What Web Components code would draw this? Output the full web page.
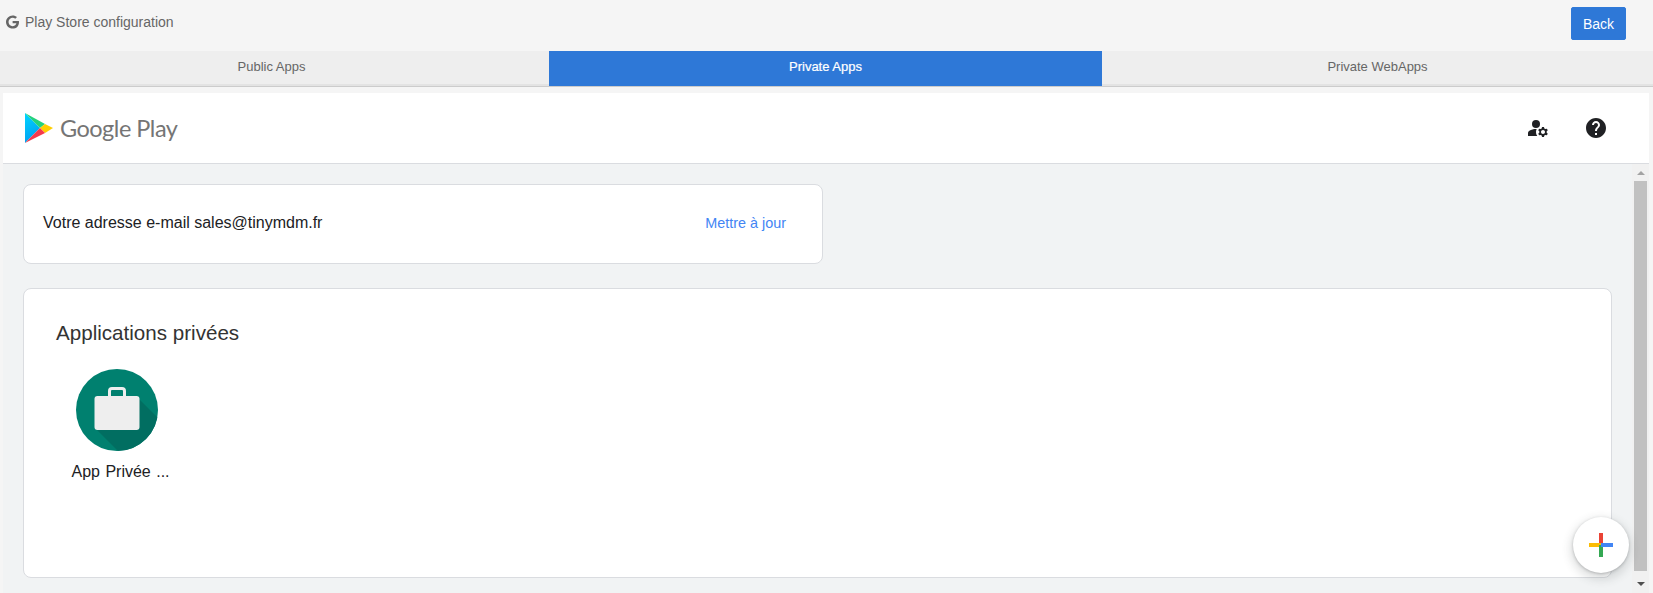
<!DOCTYPE html>
<html lang="en">
<head>
<meta charset="utf-8">
<title>Play Store configuration</title>
<style>
  html, body { margin: 0; height: 593px; overflow: hidden; background: #f5f5f5; font-family: "Liberation Sans", Arial, sans-serif; }
  tab-item:first-child { padding-right: 6px; }
</style>
</head>
<body>
<top-bar>Play Store configuration</top-bar>
<tab-bar>
  <tab-item>Public Apps</tab-item>
  <tab-item active>Private Apps</tab-item>
  <tab-item>Private WebApps</tab-item>
</tab-bar>
<play-frame>
  <play-card slot="cards" kind="mail">
    <span>Votre adresse e-mail sales@tinymdm.fr</span>
    <a slot="action">Mettre à jour</a>
  </play-card>
  <play-card slot="cards" kind="apps">
    <h2 slot="title">Applications privées</h2>
    <app-tile>App Privée ...</app-tile>
  </play-card>
</play-frame>

<script>
class TopBar extends HTMLElement {
  constructor() {
    super();
    this.attachShadow({mode: 'open'}).innerHTML = `
      <style>
        :host {
          display: flex;
          align-items: center;
          justify-content: space-between;
          height: 51px;
          box-sizing: border-box;
          padding: 0 27px 7px 6px;
          background: #f5f5f5;
          color: #666;
          font-size: 14px;
        }
        .title { display: flex; align-items: center; gap: 6px; }
        svg { width: 13px; height: 14px; fill: #666; display: block; }
        button {
          width: 55px;
          height: 33px;
          margin-top: 3px;
          border: 1px solid #2f79d8;
          border-radius: 2px;
          background: #2e78d7;
          color: #fff;
          font: 14px "Liberation Sans", Arial, sans-serif;
          padding: 0;
        }
      </style>
      <div class="title">
        <svg viewBox="0 0 488 512"><path d="M488 261.8C488 403.3 391.1 504 248 504 110.8 504 0 393.2 0 256S110.8 8 248 8c66.8 0 123 24.5 166.3 64.9l-67.5 64.9C258.5 52.6 94.3 116.6 94.3 256c0 86.5 69.1 156.6 153.7 156.6 98.2 0 135-70.4 140.8-106.9H248v-85.3h236.1c2.3 12.7 3.9 24.9 3.9 41.4z"/></svg>
        <span><slot></slot></span>
      </div>
      <button>Back</button>
    `;
  }
}

class TabBar extends HTMLElement {
  constructor() {
    super();
    this.attachShadow({mode: 'open'}).innerHTML = `
      <style>
        :host {
          display: grid;
          grid-template-columns: 549px 553px 551px;
          height: 36px;
          background: #eee;
          border-bottom: 1px solid #ccc;
          box-sizing: border-box;
        }
      </style>
      <slot></slot>
    `;
  }
}

class TabItem extends HTMLElement {
  constructor() {
    super();
    this.attachShadow({mode: 'open'}).innerHTML = `
      <style>
        :host {
          display: flex;
          align-items: center;
          justify-content: center;
          height: 35px;
          box-sizing: border-box;
          padding-bottom: 3px;
          border-bottom: 2px solid #e3e3e3;
          background: #eee;
          color: #666;
          font-size: 13px;
        }
        :host([active]) {
          background: #2e78d7;
          border-bottom-color: #2e78d7;
          color: #fff;
          -webkit-text-stroke: 0.2px #fff;
        }
      </style>
      <slot></slot>
    `;
  }
}

class PlayFrame extends HTMLElement {
  constructor() {
    super();
    this.attachShadow({mode: 'open'}).innerHTML = `
      <style>
        :host {
          display: block;
          margin: 6px 4px 0 3px;
        }
        header {
          display: flex;
          align-items: center;
          height: 71px;
          box-sizing: border-box;
          padding: 0 41px 0 22px;
          background: #fff;
          border-bottom: 1px solid #dadce0;
        }
        .logo { display: flex; align-items: center; gap: 7px; }
        .logo svg { display: block; }
        .word {
          font: 23.5px/28px Lato, "Open Sans", sans-serif;
          color: #757575;
          letter-spacing: -0.5px;
          margin-top: -1px;
        }
        .icons { margin-left: auto; display: flex; gap: 34px; }
        .icons svg { width: 24px; height: 24px; fill: #202124; display: block; }
        .pane {
          position: relative;
          display: flex;
          height: 429px;
          background: #f1f3f4;
        }
        .cards {
          flex: 1;
          display: flex;
          flex-direction: column;
          gap: 24px;
          padding: 20px 20px 0;
        }
        .fab {
          position: absolute;
          left: 1570px;
          top: 353px;
          width: 56px;
          height: 56px;
          border-radius: 50%;
          background: #fff;
          box-shadow: 0 1px 3px rgba(60,64,67,.3), 0 4px 8px 3px rgba(60,64,67,.15);
          display: flex;
          align-items: center;
          justify-content: center;
        }
      </style>
      <header>
        <div class="logo">
          <svg width="28" height="30" viewBox="0 0 28 30">
            <defs>
              <linearGradient id="pb" x1="0" y1="0" x2="0.3" y2="1">
                <stop offset="0" stop-color="#00d6ff"/>
                <stop offset="1" stop-color="#00a0f2"/>
              </linearGradient>
            </defs>
            <polygon points="0,0 0,30 15,15" fill="url(#pb)"/>
            <polygon points="0,0 20,11 15,15" fill="#24d27c"/>
            <polygon points="20,11 28,15 20,20 15,15" fill="#ffce00"/>
            <polygon points="0,30 15,15 20,20" fill="#f5394d"/>
          </svg>
          <span class="word">Google Play</span>
        </div>
        <div class="icons">
          <svg viewBox="0 0 24 24"><circle cx="10" cy="8" r="4"/><path d="M10.67,13.02C10.45,13.01,10.23,13,10,13c-2.42,0-4.68,0.67-6.61,1.82C2.51,15.34,2,16.32,2,17.35V20h9.26C10.47,18.87,10,17.49,10,16C10,14.93,10.25,13.93,10.67,13.02z"/><path d="M20.75,16c0-0.22-0.03-0.42-0.06-0.63l1.14-1.01l-1-1.73l-1.45,0.49c-0.32-0.27-0.68-0.48-1.08-0.63L18,11h-2l-0.3,1.49c-0.4,0.15-0.76,0.36-1.08,0.63l-1.45-0.49l-1,1.73l1.14,1.01c-0.03,0.21-0.06,0.41-0.06,0.63s0.03,0.42,0.06,0.63l-1.14,1.01l1,1.73l1.45-0.49c0.32,0.27,0.68,0.48,1.08,0.63L16,21h2l0.3-1.49c0.4-0.15,0.76-0.36,1.08-0.63l1.45,0.49l1-1.73l-1.14-1.01C20.72,16.42,20.75,16.22,20.75,16z M17,18c-1.1,0-2-0.9-2-2s0.9-2,2-2s2,0.9,2,2S18.1,18,17,18z"/></svg>
          <svg viewBox="0 0 24 24"><path d="M12 2C6.48 2 2 6.48 2 12s4.48 10 10 10 10-4.48 10-10S17.52 2 12 2zm1 17h-2v-2h2v2zm2.07-7.75l-.9.92C13.45 12.9 13 13.5 13 15h-2v-.5c0-1.1.45-2.1 1.17-2.83l1.24-1.26c.37-.36.59-.86.59-1.41 0-1.1-.9-2-2-2s-2 .9-2 2H8c0-2.21 1.79-4 4-4s4 1.79 4 4c0 .88-.36 1.68-.93 2.25z"/></svg>
        </div>
      </header>
      <div class="pane">
        <div class="cards"><slot name="cards"></slot></div>
        <fake-scroll></fake-scroll>
        <div class="fab">
          <svg width="24" height="24" viewBox="0 0 24 24">
            <rect x="10" y="0" width="4" height="12" fill="#ea4335"/>
            <rect x="0" y="10" width="12" height="4" fill="#fbbc04"/>
            <rect x="10" y="12" width="4" height="12" fill="#34a853"/>
            <rect x="12" y="10" width="12" height="4" fill="#4285f4"/>
          </svg>
        </div>
      </div>
    `;
  }
}

class FakeScroll extends HTMLElement {
  constructor() {
    super();
    this.attachShadow({mode: 'open'}).innerHTML = `
      <style>
        :host {
          display: flex;
          flex-direction: column;
          align-items: center;
          width: 17px;
          box-sizing: border-box;
          background: #f1f1f1;
        }
        .thumb { width: 13px; height: 390px; margin-top: 6px; background: #c1c1c1; }
        .up, .down { width: 0; height: 0; border-left: 4px solid transparent; border-right: 4px solid transparent; }
        .up { margin-top: 7px; border-bottom: 4px solid #a3a3a3; }
        .down { margin-top: 11px; border-top: 4px solid #505050; }
      </style>
      <div class="up"></div>
      <div class="thumb"></div>
      <div class="down"></div>
    `;
  }
}

class PlayCard extends HTMLElement {
  constructor() {
    super();
    this.attachShadow({mode: 'open'}).innerHTML = `
      <style>
        :host {
          display: block;
          box-sizing: border-box;
          background: #fff;
          border: 1px solid #dadce0;
          border-radius: 8px;
          color: #202124;
        }
        :host([kind="mail"]) {
          display: flex;
          align-items: center;
          justify-content: space-between;
          width: 800px;
          height: 80px;
          padding: 0 36px 2px 19px;
          font: 16px "Liberation Sans", Arial, sans-serif;
        }
        :host([kind="apps"]) {
          height: 290px;
          padding: 32px 31px 0;
        }
        ::slotted(h2) {
          margin: 0 0 24px 1px;
          color: #333;
          font: 400 20.6px/24px "Liberation Sans", Arial, sans-serif;
        }
        ::slotted(a) {
          color: #4285f4;
          font-size: 14.4px;
          margin-top: -1px;
        }
      </style>
      <slot name="title"></slot>
      <slot></slot>
      <slot name="action"></slot>
    `;
  }
}

class AppTile extends HTMLElement {
  constructor() {
    super();
    this.attachShadow({mode: 'open'}).innerHTML = `
      <style>
        :host {
          display: flex;
          flex-direction: column;
          align-items: center;
          width: 124px;
          gap: 12px;
          color: #202124;
          font: 16px "Liberation Sans", Arial, sans-serif;
        }
        svg { display: block; }
        span { margin-left: 7px; word-spacing: 1px; }
      </style>
      <svg width="82" height="82" viewBox="0 0 82 82">
        <defs><clipPath id="c"><circle cx="41" cy="41" r="41"/></clipPath></defs>
        <circle cx="41" cy="41" r="41" fill="#00806f"/>
        <polygon clip-path="url(#c)" points="63,30 95,62 95,95 55,95 21,61" fill="#016e61"/>
        <path d="M33.5 27v-5a2.5 2.5 0 0 1 2.5-2.5h10a2.5 2.5 0 0 1 2.5 2.5v5" fill="none" stroke="#eee" stroke-width="3"/>
        <rect x="18.5" y="27" width="45" height="34" rx="3" fill="#eee"/>
      </svg>
      <span><slot></slot></span>
    `;
  }
}

customElements.define('top-bar', TopBar);
customElements.define('tab-bar', TabBar);
customElements.define('tab-item', TabItem);
customElements.define('play-frame', PlayFrame);
customElements.define('fake-scroll', FakeScroll);
customElements.define('play-card', PlayCard);
customElements.define('app-tile', AppTile);
</script>
</body>
</html>
